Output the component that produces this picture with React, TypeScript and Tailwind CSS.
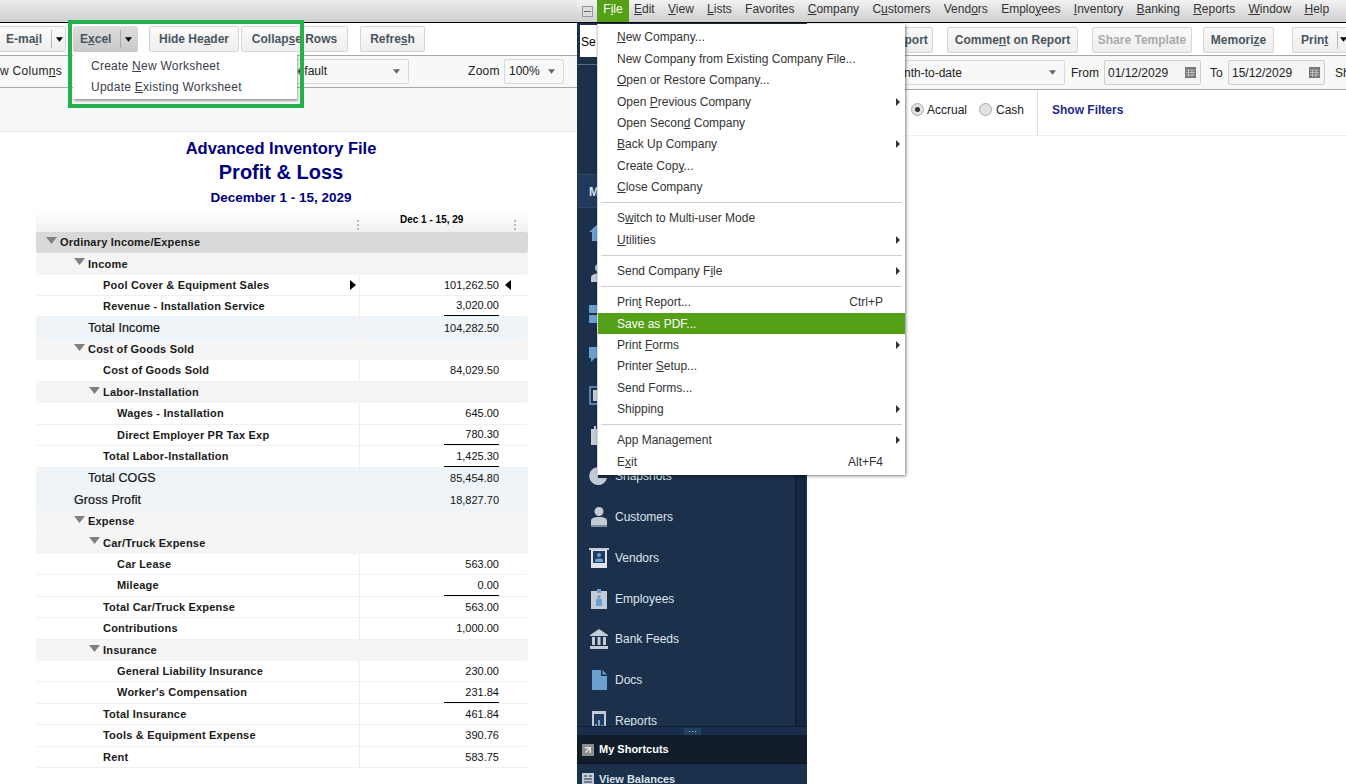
import type { ReactNode } from 'react'

/* "&" marks the mnemonic letter, which gets underlined */
function Mn({ text }: { text: string }) {
  const i = text.indexOf('&')
  if (i < 0) return <span>{text}</span>
  return (
    <span>
      {text.slice(0, i)}
      <u>{text[i + 1]}</u>
      {text.slice(i + 2)}
    </span>
  )
}

function Caret({ className }: { className?: string }) {
  return (
    <svg className={className} width="7" height="5" viewBox="0 0 9 6" aria-hidden>
      <path d="M0 0h9L4.5 6z" fill="currentColor" />
    </svg>
  )
}

function ToolButton({ label, width, disabled }: { label: string; width: string; disabled?: boolean }) {
  return (
    <div
      className={`${width} flex h-[26px] shrink-0 items-center justify-center rounded-[2px] border border-[#d6d6d6] bg-gradient-to-b from-[#fafafa] to-[#eeeeee] text-[12px] font-bold ${disabled ? 'text-[#a9a9a9]' : 'text-[#4a5560]'}`}
    >
      <Mn text={label} />
    </div>
  )
}

function Select({ width, children }: { width: string; children: ReactNode }) {
  return (
    <div className={`${width} flex h-[25px] shrink-0 items-center justify-between rounded-[2px] border border-[#d8d8d8] bg-[#f8f8f8] pr-2 pl-1 text-[12px] text-[#222]`}>
      <span>{children}</span>
      <Caret className="text-[#666]" />
    </div>
  )
}

type Row = {
  label: string
  amount?: string
  level: number
  kind?: 'top' | 'group' | 'total' | 'plain'
  line?: boolean
  marks?: boolean
}

const rows: Row[] = [
  { label: 'Ordinary Income/Expense', level: 60, kind: 'top' },
  { label: 'Income', level: 88, kind: 'group' },
  { label: 'Pool Cover & Equipment Sales', amount: '101,262.50', level: 103, marks: true },
  { label: 'Revenue - Installation Service', amount: '3,020.00', level: 103, line: true },
  { label: 'Total Income', amount: '104,282.50', level: 88, kind: 'total' },
  { label: 'Cost of Goods Sold', level: 88, kind: 'group' },
  { label: 'Cost of Goods Sold', amount: '84,029.50', level: 103 },
  { label: 'Labor-Installation', level: 103, kind: 'group' },
  { label: 'Wages - Installation', amount: '645.00', level: 117 },
  { label: 'Direct Employer PR Tax Exp', amount: '780.30', level: 117, line: true },
  { label: 'Total Labor-Installation', amount: '1,425.30', level: 103, line: true },
  { label: 'Total COGS', amount: '85,454.80', level: 88, kind: 'total' },
  { label: 'Gross Profit', amount: '18,827.70', level: 74, kind: 'total' },
  { label: 'Expense', level: 88, kind: 'group' },
  { label: 'Car/Truck Expense', level: 103, kind: 'group' },
  { label: 'Car Lease', amount: '563.00', level: 117 },
  { label: 'Mileage', amount: '0.00', level: 117, line: true },
  { label: 'Total Car/Truck Expense', amount: '563.00', level: 103 },
  { label: 'Contributions', amount: '1,000.00', level: 103 },
  { label: 'Insurance', level: 103, kind: 'group' },
  { label: 'General Liability Insurance', amount: '230.00', level: 117 },
  { label: "Worker's Compensation", amount: '231.84', level: 117, line: true },
  { label: 'Total Insurance', amount: '461.84', level: 103 },
  { label: 'Tools & Equipment Expense', amount: '390.76', level: 103 },
  { label: 'Rent', amount: '583.75', level: 103 },
]

function ReportRow({ row }: { row: Row }) {
  const kind = row.kind ?? 'plain'
  const bg =
    kind === 'top'
      ? 'bg-[#d9d9d9]'
      : kind === 'group'
        ? 'bg-[#f5f5f5]'
        : kind === 'total'
          ? 'bg-[#eff4f8]'
          : 'border-b border-[#f0f0f0]'
  const isGroup = kind === 'top' || kind === 'group'
  return (
    <div className={`relative flex h-[21.47px] items-center rounded-[2px] text-[#111] ${bg}`}>
      <div
        className={`relative flex h-full w-[323px] shrink-0 items-center ${kind === 'total' ? 'text-[12.5px] tracking-[0.1px] [-webkit-text-stroke:0.2px_#111]' : 'text-[11px] font-bold tracking-[0.2px] text-[#1a1a1a]'}`}
      >
        {isGroup && (
          <svg className="absolute top-[5px]" style={{ left: row.level - 50 }} width="11" height="7" viewBox="0 0 11 7" aria-hidden>
            <path d="M0 0h11L5.5 7z" fill="#808080" />
          </svg>
        )}
        <span className="absolute whitespace-nowrap" style={{ left: row.level - 36 }}>
          {row.label}
        </span>
        {row.marks && (
          <span className="absolute right-[3px] h-0 w-0 border-y-[5px] border-l-[6px] border-y-transparent border-l-black" />
        )}
      </div>
      {!isGroup && (
        <div className="relative flex h-full flex-1 items-center justify-end border-l border-[#efefef] pr-[29px] text-[11px]">
          <span className={`flex h-full w-[55px] items-center justify-end ${row.line ? 'border-b border-black' : ''}`}>
            {row.amount}
          </span>
          {row.marks && (
            <span className="absolute right-[17px] h-0 w-0 border-y-[5px] border-r-[6px] border-y-transparent border-r-black" />
          )}
        </div>
      )}
    </div>
  )
}

function Dots() {
  return (
    <span className="flex flex-col gap-[2px]">
      <i className="h-[2px] w-[2px] bg-[#bbb]" />
      <i className="h-[2px] w-[2px] bg-[#bbb]" />
      <i className="h-[2px] w-[2px] bg-[#bbb]" />
    </span>
  )
}

function ReportPane() {
  return (
    <div className="relative flex h-full w-[577px] shrink-0 flex-col overflow-hidden bg-white font-['Liberation_Sans',sans-serif]">
      <div className="h-[22px] shrink-0 bg-gradient-to-b from-[#ececec] to-[#cfcfcf]" />
      <div className="h-px shrink-0 bg-black" />

      {/* toolbar */}
      <div className="flex h-[33px] shrink-0 items-center border-b border-[#a8a8a8] bg-white">
        <div className="flex h-[26px] w-[66px] shrink-0 items-center rounded-r-[2px] border border-l-0 border-[#d6d6d6] bg-gradient-to-b from-[#fafafa] to-[#eeeeee] text-[12px] font-bold text-[#4a5560]">
          <span className="w-[52px] border-r border-[#bbb] pl-[6px]"><Mn text="E-ma&il" /></span>
          <Caret className="ml-[4px] text-black" />
        </div>
        <div className="ml-[7px] flex h-[26px] w-[65px] shrink-0 items-center rounded-[2px] bg-gradient-to-b from-[#dddddd] to-[#c9c9c9] text-[12px] font-bold text-[#4a5560]">
          <span className="w-[48px] border-r border-[#aaa] pl-[7px]"><Mn text="E&xcel" /></span>
          <Caret className="ml-[4px] text-black" />
        </div>
        <div className="ml-[11px] flex gap-[2px]">
          <ToolButton label="Hide He&ader" width="w-[90px]" />
          <ToolButton label="Collap&se Rows" width="w-[107px]" />
        </div>
        <div className="ml-[12px]">
          <ToolButton label="Refre&sh" width="w-[65px]" />
        </div>
      </div>

      {/* second row */}
      <div className="flex h-[32px] shrink-0 items-center border-b border-[#a8a8a8] bg-[#f8f8f8] pb-[1px] text-[12px] text-[#222]">
        <span className="w-[250px] shrink-0 whitespace-nowrap tracking-[0.3px]">w Colum<u>n</u>s</span>
        <Select width="w-[159px]"><span className="pl-[34px]">Default</span></Select>
        <span className="ml-[59px] w-[36px] shrink-0 tracking-[0.3px]">Zoom</span>
        <Select width="w-[60px]">100%</Select>
      </div>

      <div className="h-[44px] shrink-0 border-b border-[#e6e6e6] bg-[#f7f7f7]" />

      {/* report title */}
      <div className="flex h-[78px] shrink-0 flex-col items-center pr-[15px] pt-[6px] font-bold text-[#00007f]">
        <div className="text-[16.5px] leading-[20px]">Advanced Inventory File</div>
        <div className="mt-[1px] text-[20px] leading-[26px]">Profit &amp; Loss</div>
        <div className="mt-[4px] text-[13.5px] leading-[18px]">December 1 - 15, 2029</div>
      </div>

      {/* report table */}
      <div className="ml-[36px] w-[492px]">
        <div className="flex h-[21.6px] items-center bg-gradient-to-b from-white to-[#f0f0f0]">
          <div className="flex h-full w-[323px] shrink-0 items-end justify-end pb-[2px]">
            <Dots />
          </div>
          <div className="relative h-full flex-1 pl-[41px] pt-[2px] text-[10px] font-bold text-black">
            Dec 1 - 15, 29
            <span className="absolute right-[12px] bottom-[2px]"><Dots /></span>
          </div>
        </div>
        {rows.map((row, i) => (
          <ReportRow key={i} row={row} />
        ))}
      </div>

      {/* excel dropdown */}
      <div className="absolute top-[53px] left-[73px] h-[46px] w-[224px] bg-white pt-[2px] text-[12px] tracking-[0.25px] text-[#3c3c4c] shadow-[1px_2px_2px_rgba(0,0,0,0.35)]">
        <div className="flex h-[21px] items-center pl-[18px]"><Mn text="Create &New Worksheet" /></div>
        <div className="flex h-[21px] items-center pl-[18px]"><Mn text="Update &Existing Worksheet" /></div>
      </div>
      <div className="absolute top-[20px] left-[68px] h-[88px] w-[236px] border-[4px] border-[#22b14c]" />
    </div>
  )
}

const menuBar = ['&Edit', '&View', '&Lists', 'Favorites', '&Company', 'C&ustomers', 'Vend&ors', 'Emplo&yees', '&Inventory', '&Banking', '&Reports', '&Window', '&Help']

type MenuItem = { label: string; sub?: boolean; key?: string; active?: boolean } | 'sep'

const fileMenu: MenuItem[] = [
  { label: '&New Company...' },
  { label: 'New Company from Existing Company File...' },
  { label: '&Open or Restore Company...' },
  { label: 'Open &Previous Company', sub: true },
  { label: 'Open Secon&d Company' },
  { label: '&Back Up Company', sub: true },
  { label: 'Create Cop&y...' },
  { label: '&Close Company' },
  'sep',
  { label: 'S&witch to Multi-user Mode' },
  { label: '&Utilities', sub: true },
  'sep',
  { label: 'Send Company F&ile', sub: true },
  'sep',
  { label: 'Prin&t Report...', key: 'Ctrl+P' },
  { label: 'Save as PDF...', active: true },
  { label: 'Print &Forms', sub: true },
  { label: 'Printer &Setup...' },
  { label: 'Send Forms...' },
  { label: 'Shippin&g', sub: true },
  'sep',
  { label: 'App Management', sub: true },
  { label: 'E&xit', key: 'Alt+F4' },
]

function FileMenu() {
  return (
    <div className="absolute top-[24px] left-[20px] w-[308px] border-l border-[#d8d8d8] bg-white pt-[2.8px] pb-[3px] text-[12px] text-[#333] shadow-[1px_1px_3px_rgba(0,0,0,0.5)]">
      {fileMenu.map((item, i) =>
        item === 'sep' ? (
          <div key={i} className="flex h-[9.8px] items-center px-[3px]">
            <div className="h-px w-full bg-[#cfcfcf]" />
          </div>
        ) : (
          <div
            key={i}
            className={`relative flex h-[21.4px] items-center justify-between pr-[22px] pl-[19px] ${item.active ? 'bg-[#53a017] text-white' : ''}`}
          >
            <Mn text={item.label} />
            {item.key && <span>{item.key}</span>}
            {item.sub && (
              <span className="absolute right-[5px] h-0 w-0 border-y-[4px] border-l-[4px] border-y-transparent border-l-[#333]" />
            )}
          </div>
        ),
      )}
    </div>
  )
}

function NavIcon({ name }: { name: string }) {
  const blue = '#6a9fcf'
  const light = '#c3ccd6'
  return (
    <svg width="22" height="22" viewBox="0 0 22 22" aria-hidden>
      {name === 'home' && <path d="M1 11 11 2l10 9h-3v9H4v-9z" fill={blue} />}
      {name === 'person' && (
        <path d="M11 2a4 4 0 0 1 4 4c0 2-1 4-2 4v1c4 1 7 2 7 5v4H3v-4c0-3 3-4 7-5v-1C9 10 7 8 7 6a4 4 0 0 1 4-4z" fill={light} />
      )}
      {name === 'tiles' && (
        <>
          <rect x="1" y="2" width="9" height="8" rx="1" fill={blue} />
          <rect x="1" y="12" width="9" height="8" rx="1" fill={blue} />
          <rect x="12" y="2" width="9" height="8" rx="1" fill={light} />
        </>
      )}
      {name === 'chat' && <path d="M1 4h17v11H7l-4 4v-4H1z" fill={blue} />}
      {name === 'entry' && (
        <>
          <rect x="2" y="3" width="17" height="17" fill="none" stroke={blue} strokeWidth="1.5" />
          <rect x="5" y="6" width="11" height="11" fill={light} />
        </>
      )}
      {name === 'calendar' && (
        <>
          <rect x="3" y="4" width="15" height="16" fill={light} />
          <rect x="6" y="1" width="2" height="5" fill={light} />
          <rect x="13" y="1" width="2" height="5" fill={light} />
        </>
      )}
      {name === 'snapshot' && <path d="M10 2a9 9 0 1 0 9 11h-9zM12 1v9h9a9 9 0 0 0-9-9z" fill={light} />}
      {name === 'customers' && (
        <>
          <circle cx="11" cy="5.5" r="4.5" fill={light} />
          <path d="M3 20v-5c0-3 3-4 8-4s8 1 8 4v5z" fill={light} />
          <rect x="3" y="19" width="16" height="2" fill="#7f8c9c" />
        </>
      )}
      {name === 'vendors' && (
        <>
          <rect x="3" y="3" width="16" height="18" fill="#dfe4ea" />
          <rect x="1" y="1" width="20" height="2" fill={light} />
          <rect x="5" y="4" width="12" height="12" fill="#203c5e" />
          <circle cx="11" cy="8" r="2" fill={blue} />
          <path d="M7 15v-2c0-2 8-2 8 0v2z" fill={blue} />
        </>
      )}
      {name === 'employees' && (
        <>
          <rect x="3" y="3" width="16" height="18" fill={light} />
          <rect x="9" y="1" width="4" height="4" fill={blue} />
          <circle cx="11" cy="9" r="1.8" fill={blue} />
          <rect x="8" y="11" width="6" height="7" fill={blue} />
        </>
      )}
      {name === 'bank' && (
        <path d="M11 1 20 7v1H2V7zM4 9h3v8H4zM9.5 9h3v8h-3zM15 9h3v8h-3zM2 18h18v3H2z" fill={light} />
      )}
      {name === 'docs' && <path d="M4 1h9v6h6v14H4zM14.5 1 19 5.5h-4.5z" fill={blue} />}
      {name === 'reports' && (
        <>
          <rect x="4" y="1" width="14" height="21" fill={light} />
          <rect x="6" y="4" width="10" height="18" fill="#203c5e" />
          <rect x="7" y="14" width="2" height="8" fill={blue} />
          <rect x="10" y="10" width="2" height="12" fill={blue} />
          <rect x="13" y="15" width="2" height="7" fill={blue} />
        </>
      )}
    </svg>
  )
}

const navItems = [
  { icon: 'home', label: 'Home' },
  { icon: 'person', label: 'My Company' },
  { icon: 'tiles', label: 'Income Tracker' },
  { icon: 'chat', label: 'Calendar' },
  { icon: 'entry', label: 'Bill Tracker' },
  { icon: 'calendar', label: 'Snapshots' },
  { icon: 'snapshot', label: 'Snapshots' },
  { icon: 'customers', label: 'Customers' },
  { icon: 'vendors', label: 'Vendors' },
  { icon: 'employees', label: 'Employees' },
  { icon: 'bank', label: 'Bank Feeds' },
  { icon: 'docs', label: 'Docs' },
  { icon: 'reports', label: 'Reports' },
]

function Sidebar() {
  return (
    <div className="flex h-full w-[230px] shrink-0 flex-col bg-[#1b304b] text-[12px] text-[#dde4ec]">
      <div className="flex h-[42px] shrink-0 items-start border-b border-[#5b6b7e] pt-[2px] pl-[3px]">
        <div className="h-[32px] w-[18px] bg-white pl-[1px] pt-[8px] text-[12px] text-black">Se</div>
      </div>
      <div className="h-[109px] shrink-0" />
      <div className="flex h-[34px] shrink-0 items-center border-y border-[#33485f] bg-[#1f3a5c] pt-[1px] pl-[12px] font-bold">M</div>
      <div className="relative flex h-[518px] shrink-0 overflow-hidden">
        <div className="flex-1 pt-[4px]">
          {navItems.map((n, i) => (
            <div key={i} className="flex h-[40.7px] items-center gap-[5px] pl-[11px]">
              <NavIcon name={n.icon} />
              <span className="text-[12px]">{n.label}</span>
            </div>
          ))}
        </div>
        <div className="mr-[2px] w-[10px] shrink-0 border-x border-[#0d1a2a] bg-[#14273e]" />
      </div>
      <div className="flex h-[9px] shrink-0 items-center justify-center border-t border-[#0f1e30] bg-[#1a2f4b]">
        <span className="flex h-[7px] w-[17px] items-center justify-center gap-[2px] bg-[#23405f]">
          <i className="h-px w-px bg-[#9fb0c2]" />
          <i className="h-px w-px bg-[#9fb0c2]" />
          <i className="h-px w-px bg-[#9fb0c2]" />
        </span>
      </div>
      <div className="flex h-[29px] shrink-0 items-center gap-[5px] border-b border-[#0a1522] bg-[#111d2b] pt-[1px] pl-[5px] text-[11px] font-bold text-white">
        <svg width="12" height="12" viewBox="0 0 12 12" aria-hidden>
          <rect width="12" height="12" fill="#8c8c8c" />
          <path d="M3 3h6v6H7.5V5.5L4 9 3 8l3.5-3.5H3z" fill="#e4e4e4" />
        </svg>
        My Shortcuts
      </div>
      <div className="flex h-[29px] shrink-0 items-center gap-[5px] pt-[1px] pl-[5px] text-[11px] font-bold text-[#dde4ec]">
        <svg width="12" height="12" viewBox="0 0 12 12" aria-hidden>
          <rect width="12" height="12" fill="#c3ccd6" />
          <path d="M2 3h3M7 3h3M2 6h8M2 9h8" stroke="#1b304b" strokeWidth="1" />
        </svg>
        View Balances
      </div>
    </div>
  )
}

function DateField({ value }: { value: string }) {
  return (
    <div className="flex h-[25px] w-[97px] shrink-0 items-center justify-between rounded-[2px] border border-[#cfcfcf] bg-[#f4f4f4] pr-[4px] pl-[3px] text-[12px] text-[#222]">
      {value}
      <svg width="11" height="11" viewBox="0 0 11 11" aria-hidden>
        <rect width="11" height="11" fill="#777" />
        <path d="M1 3h9M1 5.5h9M1 8h9M3.5 3v7M7 3v7" stroke="#ccc" strokeWidth="0.8" />
      </svg>
    </div>
  )
}

function Radio({ on }: { on?: boolean }) {
  return (
    <span className="flex h-[13px] w-[13px] shrink-0 items-center justify-center rounded-full border border-[#aaa] bg-[#e2e2e2]">
      {on && <span className="h-[5px] w-[5px] rounded-full bg-[#333]" />}
    </span>
  )
}

function MainPane() {
  return (
    <div className="flex min-w-0 flex-1 flex-col bg-white text-[12px]">
      <div className="flex h-[33px] shrink-0 items-center border-b border-[#a8a8a8] pt-[1px] pl-[13px]">
        <ToolButton label="Customize Report" width="w-[113px]" />
        <div className="ml-[14px]"><ToolButton label="Comme&nt on Report" width="w-[131px]" /></div>
        <div className="ml-[14px]"><ToolButton label="Share Template" width="w-[100px]" disabled /></div>
        <div className="ml-[11px]"><ToolButton label="Memori&ze" width="w-[71px]" /></div>
        <div className="ml-[18px] flex h-[26px] w-[70px] shrink-0 items-center rounded-l-[2px] border border-r-0 border-[#d6d6d6] bg-gradient-to-b from-[#fafafa] to-[#eeeeee] font-bold text-[#4a5560]">
          <span className="w-[45px] border-r border-[#bbb] pl-[8px]">Prin<u>t</u></span>
          <Caret className="ml-[2px] text-black" />
        </div>
      </div>
      <div className="flex h-[34px] shrink-0 items-center border-b border-[#a8a8a8] bg-[#f8f8f8] text-[#222]">
        <div className="w-[258px] shrink-0">
          <Select width="w-[200px] ml-[58px]"><span className="pl-[34px]">nth-to-date</span></Select>
        </div>
        <span className="ml-[6px] w-[33px] shrink-0">From</span>
        <DateField value="01/12/2029" />
        <span className="ml-[9px] w-[18px] shrink-0">To</span>
        <DateField value="15/12/2029" />
        <span className="ml-[10px]">Sh</span>
      </div>
      <div className="flex h-[46px] shrink-0 items-center border-b border-[#eeeeee] text-[#222]">
        <div className="flex h-full w-[231px] shrink-0 items-center border-r border-[#dddddd] pb-[6px] pl-[104px]">
          <Radio on />
          <span className="ml-[3px] w-[52px] shrink-0">Accrual</span>
          <Radio />
          <span className="ml-[4px]">Cash</span>
        </div>
        <span className="mb-[6px] ml-[14px] font-bold text-[#1f2a8f]">Show Filters</span>
      </div>
    </div>
  )
}

function AppPane() {
  return (
    <div className="relative flex h-full min-w-0 flex-1 flex-col overflow-hidden bg-white font-['Liberation_Sans',sans-serif]">
      <div className="flex h-[23px] shrink-0 items-center border-b border-black bg-gradient-to-b from-[#f2f2f2] to-[#cfcfcf] text-[12px] text-[#333]">
        <span className="ml-[5px] flex h-[11px] w-[11px] items-center justify-center border border-[#999] bg-[#ddd]">
          <i className="h-px w-[7px] bg-[#666]" />
        </span>
        <span className="ml-[4px] flex h-[22px] w-[32px] items-center justify-center bg-[#53a017] pb-[4px] text-white"><Mn text="F&ile" /></span>
        <div className="ml-[5px] flex gap-[13.3px] pb-[5px]">
          {menuBar.map((m) => (
            <Mn key={m} text={m} />
          ))}
        </div>
      </div>
      <div className="flex min-h-0 flex-1">
        <Sidebar />
        <MainPane />
      </div>
      <FileMenu />
    </div>
  )
}

export default function App() {
  return (
    <div className="flex h-[784px] w-[1346px] overflow-hidden bg-white">
      <ReportPane />
      <AppPane />
    </div>
  )
}
